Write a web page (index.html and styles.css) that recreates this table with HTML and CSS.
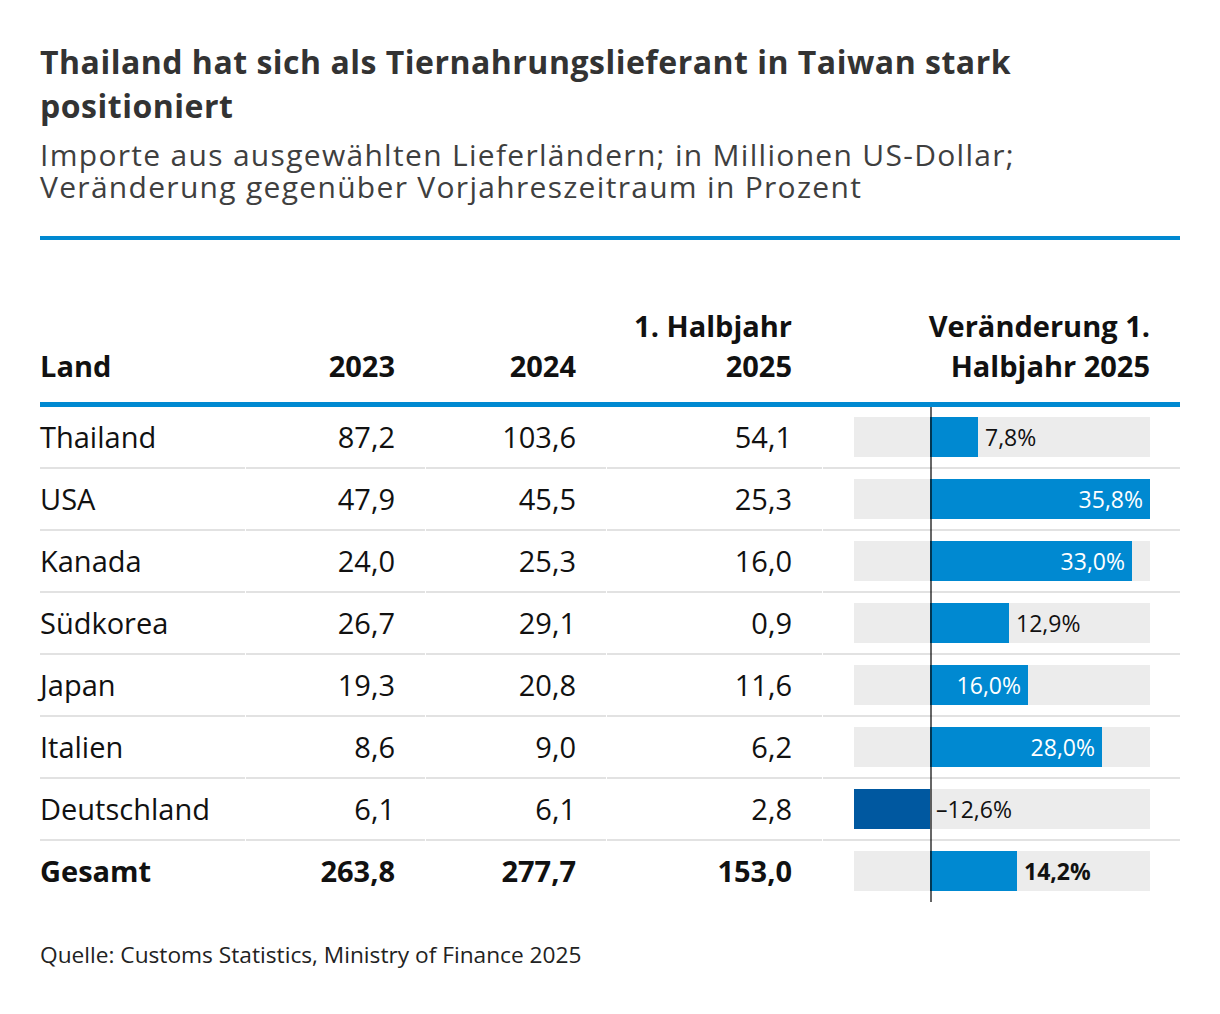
FILE: index.html
```html
<!DOCTYPE html>
<html lang="de">
<head>
<meta charset="utf-8">
<title>Tiernahrung Taiwan</title>
<link rel="stylesheet" href="styles.css">
</head>
<body>
<main class="chart">
  <h1 class="title">Thailand hat sich als Tiernahrungslieferant in Taiwan stark positioniert</h1>
  <p class="subtitle">Importe aus ausgewählten Lieferländern; in Millionen US-Dollar;<br>Veränderung gegenüber Vorjahreszeitraum in Prozent</p>
  <div class="rule"></div>
  <div class="table">
    <div class="row head">
      <div class="cell left">Land</div>
      <div class="cell">2023</div>
      <div class="cell">2024</div>
      <div class="cell">1. Halbjahr<br>2025</div>
      <div class="cell barhead">Veränderung 1.<br>Halbjahr 2025</div>
    </div>
    <div class="body">
      <div class="row">
        <div class="cell left">Thailand</div><div class="cell">87,2</div><div class="cell">103,6</div><div class="cell">54,1</div>
        <div class="cell bar-cell"><div class="track"><div class="neg"></div><div class="pos"><div class="bar" style="width:48px"></div><span class="lbl out">7,8%</span></div></div></div>
      </div>
      <div class="row">
        <div class="cell left">USA</div><div class="cell">47,9</div><div class="cell">45,5</div><div class="cell">25,3</div>
        <div class="cell bar-cell"><div class="track"><div class="neg"></div><div class="pos"><div class="bar" style="width:220px"><span class="lbl in">35,8%</span></div></div></div></div>
      </div>
      <div class="row">
        <div class="cell left">Kanada</div><div class="cell">24,0</div><div class="cell">25,3</div><div class="cell">16,0</div>
        <div class="cell bar-cell"><div class="track"><div class="neg"></div><div class="pos"><div class="bar" style="width:202px"><span class="lbl in">33,0%</span></div></div></div></div>
      </div>
      <div class="row">
        <div class="cell left">Südkorea</div><div class="cell">26,7</div><div class="cell">29,1</div><div class="cell">0,9</div>
        <div class="cell bar-cell"><div class="track"><div class="neg"></div><div class="pos"><div class="bar" style="width:79px"></div><span class="lbl out">12,9%</span></div></div></div>
      </div>
      <div class="row">
        <div class="cell left">Japan</div><div class="cell">19,3</div><div class="cell">20,8</div><div class="cell">11,6</div>
        <div class="cell bar-cell"><div class="track"><div class="neg"></div><div class="pos"><div class="bar" style="width:98px"><span class="lbl in">16,0%</span></div></div></div></div>
      </div>
      <div class="row">
        <div class="cell left">Italien</div><div class="cell">8,6</div><div class="cell">9,0</div><div class="cell">6,2</div>
        <div class="cell bar-cell"><div class="track"><div class="neg"></div><div class="pos"><div class="bar" style="width:172px"><span class="lbl in">28,0%</span></div></div></div></div>
      </div>
      <div class="row">
        <div class="cell left">Deutschland</div><div class="cell">6,1</div><div class="cell">6,1</div><div class="cell">2,8</div>
        <div class="cell bar-cell"><div class="track"><div class="neg"><div class="bar bar-neg" style="width:76px"></div></div><div class="pos"><span class="lbl out neg-lbl">–12,6%</span></div></div></div>
      </div>
      <div class="row total">
        <div class="cell left">Gesamt</div><div class="cell">263,8</div><div class="cell">277,7</div><div class="cell">153,0</div>
        <div class="cell bar-cell"><div class="track"><div class="neg"></div><div class="pos"><div class="bar" style="width:87px"></div><span class="lbl out">14,2%</span></div></div></div>
      </div>
      <div class="axis"></div>
    </div>
  </div>
  <p class="source">Quelle: Customs Statistics, Ministry of Finance 2025</p>
</main>
</body>
</html>
```

FILE: styles.css
```css
* { box-sizing: border-box; }
html, body { margin: 0; padding: 0; background: #fff; }
body {
  font-family: "Open Sans", "Noto Sans", sans-serif;
  color: #111;
}
.chart {
  width: 1220px;
  padding: 40px 40px 0 40px;
}
.title {
  margin: 0;
  font-size: 32px;
  line-height: 44px;
  font-weight: 700;
  letter-spacing: 0.5px;
  color: #333;
}
.subtitle {
  margin: 11px 0 0 0;
  font-size: 30px;
  line-height: 32px;
  font-weight: 400;
  letter-spacing: 1.3px;
  color: #3f3f3f;
}
.rule {
  margin-top: 33px;
  height: 4px;
  background: #0089d1;
}
.table {
  margin-top: 66px;
}
.row {
  display: grid;
  grid-template-columns: 205px 179px 180px 215px 357px;
  column-gap: 1px;
}
.cell {
  font-size: 29px;
  text-align: right;
  padding-right: 30px;
}
.cell.left { text-align: left; padding-right: 0; }
.head {
  border-bottom: 5px solid #0089d1;
}
.head .cell {
  font-weight: 700;
  line-height: 40px;
  padding-bottom: 16px;
  align-self: end;
}
.head .barhead { padding-right: 30px; }
.body {
  position: relative;
}
.body .cell {
  height: 62px;
  line-height: 60px;
  border-bottom: 2px solid #e2e2e2;
}
.body .total .cell { border-bottom: none; height: 60px; font-weight: 700; }
.body .bar-cell {
  padding: 10px 30px 0 31px;
}
.track {
  display: flex;
  height: 40px;
  background: #ececec;
}
.neg {
  width: 76px;
  display: flex;
  justify-content: flex-end;
}
.pos {
  flex: 1;
  display: flex;
  align-items: center;
}
.bar {
  height: 40px;
  background: #0089d1;
  display: flex;
  align-items: center;
  justify-content: flex-end;
}
.bar-neg { background: #0058a0; }
.lbl {
  font-size: 23px;
  line-height: 28px;
  color: #111;
  white-space: nowrap;
  font-weight: 400;
}
.lbl.in { color: #fff; padding-right: 7px; }
.lbl.out { padding-left: 7px; }
.lbl.neg-lbl { padding-left: 6px; }
.total .lbl { font-weight: 700; }
.axis {
  position: absolute;
  left: 890px;
  top: 0;
  bottom: -1px;
  width: 2px;
  background: rgba(0, 0, 0, 0.6);
}
.source {
  margin: 39px 0 0 0;
  font-size: 22.7px;
  line-height: 30px;
  color: #222;
}
```
